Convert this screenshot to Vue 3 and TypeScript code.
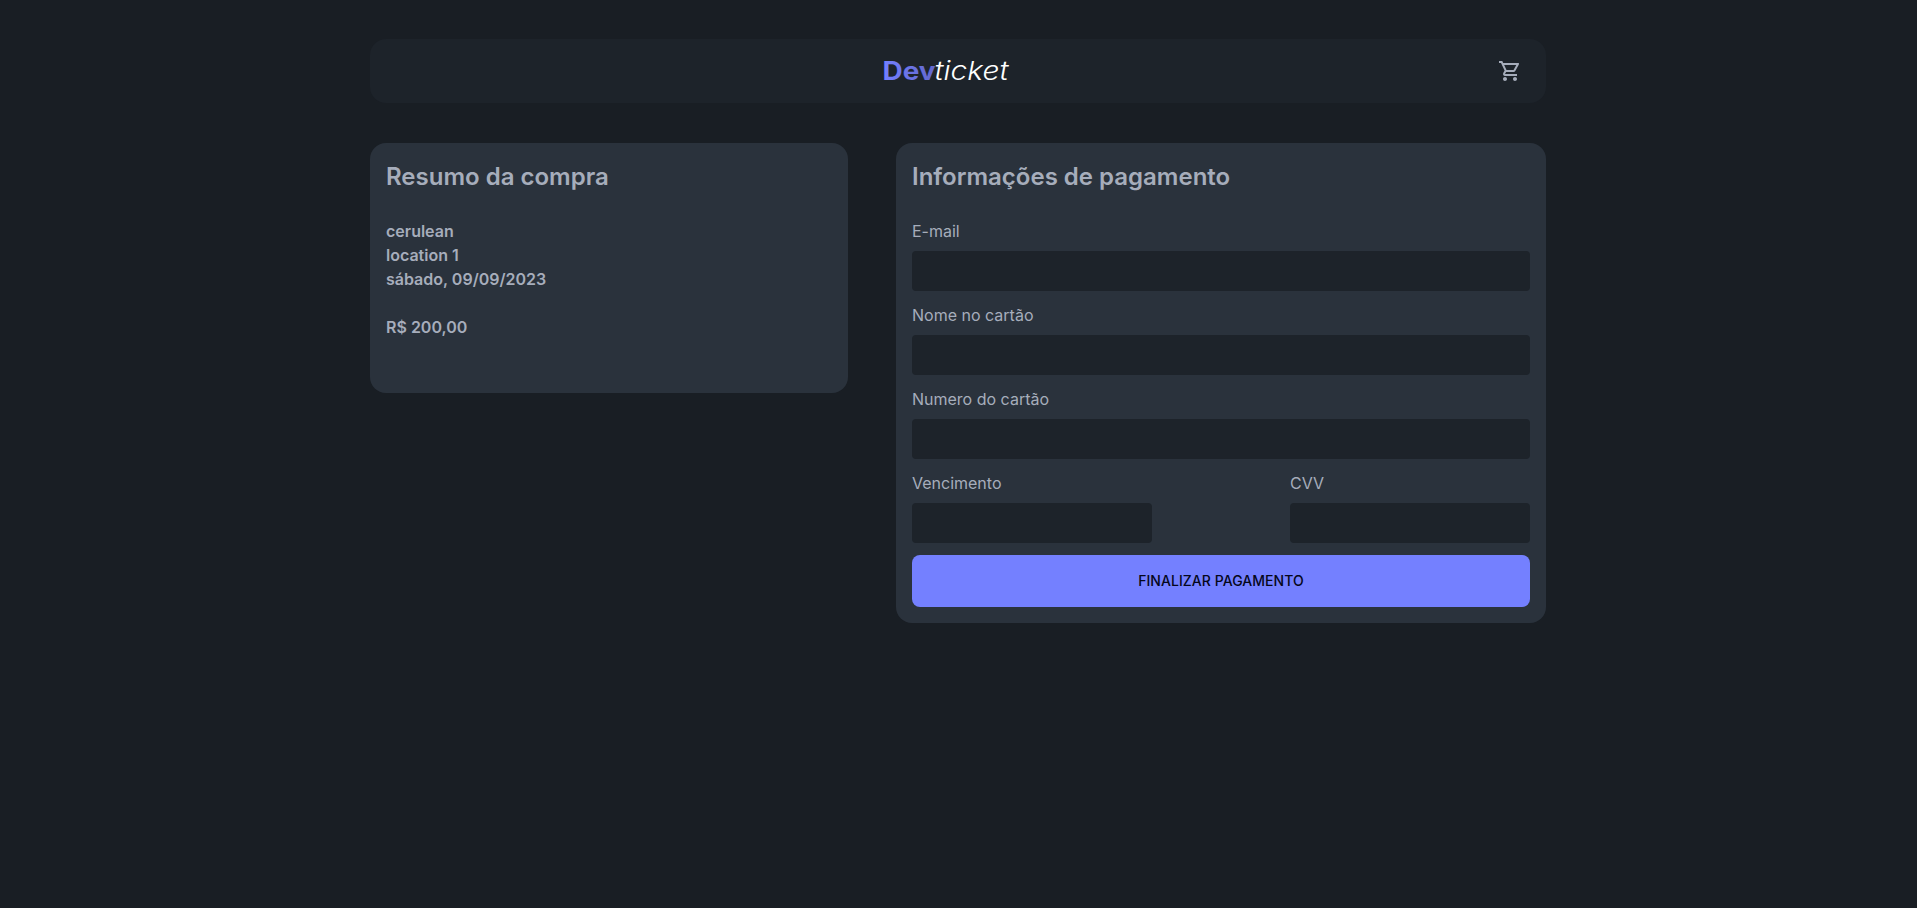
<script setup lang="ts">
import { ref } from 'vue'

interface Field {
  id: string
  label: string
}

const summary = {
  event: 'cerulean',
  location: 'location 1',
  date: 'sábado, 09/09/2023',
  price: 'R$ 200,00',
}

const wideFields: Field[] = [
  { id: 'email', label: 'E-mail' },
  { id: 'holder', label: 'Nome no cartão' },
  { id: 'number', label: 'Numero do cartão' },
]

const shortFields: Field[] = [
  { id: 'expiry', label: 'Vencimento' },
  { id: 'cvv', label: 'CVV' },
]

const form = ref<Record<string, string>>({ email: '', holder: '', number: '', expiry: '', cvv: '' })
</script>

<template>
  <div class="page">
    <header class="navbar">
      <svg class="logo" width="128" height="30" viewBox="0 0 128 30" role="img" aria-label="Devticket">
        <defs>
          <linearGradient id="brand" x1="0" x2="1" y1="0" y2="0">
            <stop offset="0" stop-color="#7480ff" />
            <stop offset="1" stop-color="#6267cb" />
          </linearGradient>
        </defs>
        <text class="logo-dev" x="0.5" y="24" textLength="53" lengthAdjust="spacingAndGlyphs" fill="url(#brand)">Dev</text>
        <text class="logo-ticket" x="52.5" y="24" textLength="74" lengthAdjust="spacingAndGlyphs">ticket</text>
      </svg>
      <button class="cart" type="button" aria-label="Carrinho">
        <svg width="24" height="24" viewBox="0 0 24 24" fill="currentColor">
          <path d="M15.55 13c.75 0 1.41-.41 1.75-1.03l3.58-6.49A.996.996 0 0 0 20.01 4H5.21l-.94-2H1v2h2l3.6 7.59-1.35 2.44C4.52 15.37 5.48 17 7 17h12v-2H7l1.1-2h7.45zM6.16 6h12.15l-2.76 5H8.53L6.16 6zM7 18c-1.1 0-1.99.9-1.99 2S5.9 22 7 22s2-.9 2-2-.9-2-2-2zm10 0c-1.1 0-1.99.9-1.99 2s.89 2 1.99 2 2-.9 2-2-.9-2-2-2z" />
        </svg>
      </button>
    </header>

    <main class="content">
      <section class="card summary">
        <h2>Resumo da compra</h2>
        <p>{{ summary.event }}</p>
        <p>{{ summary.location }}</p>
        <p>{{ summary.date }}</p>
        <p class="price">{{ summary.price }}</p>
      </section>

      <section class="card payment">
        <h2>Informações de pagamento</h2>
        <form @submit.prevent>
          <label v-for="field in wideFields" :key="field.id" class="field">
            <span>{{ field.label }}</span>
            <input v-model="form[field.id]" type="text" />
          </label>
          <div class="row">
            <label v-for="field in shortFields" :key="field.id" class="field short">
              <span>{{ field.label }}</span>
              <input v-model="form[field.id]" type="text" />
            </label>
          </div>
          <button class="submit" type="submit">Finalizar pagamento</button>
        </form>
      </section>
    </main>
  </div>
</template>

<style>
html,
body {
  background: #191e24;
}
</style>

<style scoped>
.page {
  box-sizing: border-box;
  width: 1177px;
  min-height: 100vh;
  margin: 0 auto;
  padding: 39px 1px 0 0;
  color: #a6adbb;
  font-family: Inter, "Liberation Sans", sans-serif;
  font-size: 16px;
  line-height: 24px;
}
.navbar {
  display: grid;
  grid-template-columns: 1fr auto 1fr;
  align-items: center;
  box-sizing: border-box;
  height: 64px;
  padding: 0 24px 0 0;
  border-radius: 16px;
  background: #1d232a;
}
.logo {
  grid-column: 2;
  display: block;
  overflow: visible;
}
.logo-dev {
  font: 700 25.5px Inter, sans-serif;
}
.logo-ticket {
  font: italic 300 26px Inter, sans-serif;
  fill: #fff;
}
.cart {
  justify-self: end;
  width: 24px;
  height: 24px;
  padding: 0;
  border: 0;
  background: none;
  color: inherit;
}
.cart svg {
  display: block;
}
.content {
  display: flex;
  align-items: flex-start;
  justify-content: space-between;
  margin-top: 40px;
}
.card {
  box-sizing: border-box;
  padding: 16px;
  border-radius: 16px;
  background: #2a323c;
}
.summary {
  width: 478px;
  height: 250px;
  font-weight: 600;
}
.payment {
  width: 650px;
}
h2 {
  margin: 0 0 24px;
  font-size: 24px;
  font-weight: 600;
  line-height: 36px;
}
p {
  margin: 0;
}
.price {
  margin-top: 24px;
}
form {
  display: flex;
  flex-direction: column;
  gap: 12px;
}
.field {
  display: flex;
  flex-direction: column;
  gap: 8px;
}
.row {
  display: flex;
  justify-content: space-between;
}
.short {
  width: 240px;
}
input {
  box-sizing: border-box;
  width: 100%;
  height: 40px;
  padding: 0 8px;
  border: 0;
  border-radius: 4px;
  outline: none;
  background: #1d232a;
  color: inherit;
  font: inherit;
}
.submit {
  height: 52px;
  border: 0;
  border-radius: 8px;
  background: #7480ff;
  color: #05071a;
  font: 500 14px/20px Inter, sans-serif;
  letter-spacing: 0.05px;
  text-transform: uppercase;
}
</style>
